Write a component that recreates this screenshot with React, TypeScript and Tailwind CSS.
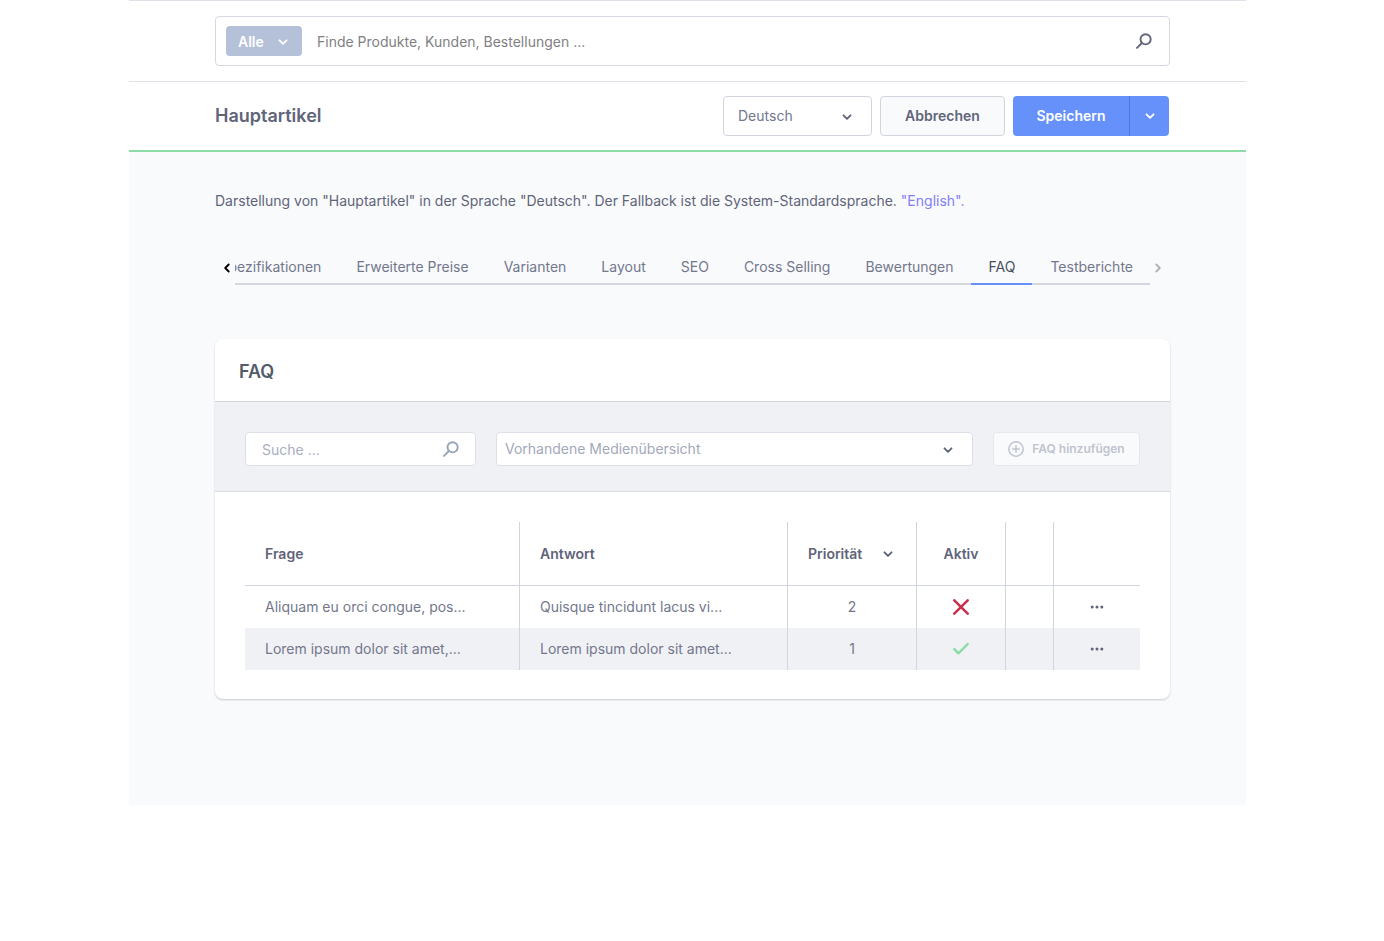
import type { ReactNode } from "react";

type IconProps = { className?: string };

function Chevron({ className = "" }: IconProps) {
  return (
    <svg viewBox="0 0 10 10" fill="none" stroke="currentColor" strokeWidth="1.9" strokeLinecap="round" strokeLinejoin="round" aria-hidden="true" className={`size-[10px] shrink-0 ${className}`}>
      <path d="M1.5 3.3 5 6.8l3.5-3.5" />
    </svg>
  );
}

function Magnifier({ className = "" }: IconProps) {
  return (
    <svg viewBox="0 0 16 16" fill="none" stroke="currentColor" strokeWidth="1.9" strokeLinecap="round" aria-hidden="true" className={`size-4 shrink-0 ${className}`}>
      <circle cx="9.6" cy="6.3" r="5.1" />
      <path d="M5.9 10 1 14.9" />
    </svg>
  );
}

function PlusCircle() {
  return (
    <svg viewBox="0 0 16 16" fill="none" stroke="currentColor" strokeWidth="1.5" strokeLinecap="round" aria-hidden="true" className="size-4 shrink-0">
      <circle cx="8" cy="8" r="7.2" />
      <path d="M8 4.7v6.6M4.7 8h6.6" />
    </svg>
  );
}

function Cross() {
  return (
    <svg viewBox="0 0 16 16" fill="none" stroke="currentColor" strokeWidth="2.5" strokeLinecap="round" role="img" aria-label="Nein" className="mx-auto size-4 text-[#c7304f]">
      <path d="m1.3 1.3 13.4 13.4M14.7 1.3 1.3 14.7" />
    </svg>
  );
}

function Check() {
  return (
    <svg viewBox="0 0 16 16" fill="none" stroke="currentColor" strokeWidth="2.4" strokeLinecap="round" strokeLinejoin="round" role="img" aria-label="Ja" className="mx-auto size-4 text-[#8adba5]">
      <path d="m1.3 8.2 4.1 4.1L14.7 3" />
    </svg>
  );
}

function Dots() {
  return (
    <svg viewBox="0 0 14 4" fill="currentColor" aria-hidden="true" className="h-1 w-[14px]">
      <circle cx="2.2" cy="2" r="1.5" />
      <circle cx="7" cy="2" r="1.5" />
      <circle cx="11.8" cy="2" r="1.5" />
    </svg>
  );
}

const tabs = ["Spezifikationen", "Erweiterte Preise", "Varianten", "Layout", "SEO", "Cross Selling", "Bewertungen", "FAQ", "Testberichte"];

const rows = [
  { question: "Aliquam eu orci congue, pos...", answer: "Quisque tincidunt lacus vi...", priority: 2, active: false },
  { question: "Lorem ipsum dolor sit amet,...", answer: "Lorem ipsum dolor sit amet...", priority: 1, active: true },
];

function HeadCell({ children, centered = false }: { children?: ReactNode; centered?: boolean }) {
  return (
    <th scope="col" className={`h-16 border-b border-[#d1d5e0] px-5 font-semibold text-[#5f6479] not-last:border-r ${centered ? "text-center" : "text-left"}`}>
      {children}
    </th>
  );
}

function FaqTable() {
  return (
    <table className="w-full table-fixed border-separate border-spacing-0">
      <colgroup>
        <col />
        <col className="w-[268px]" />
        <col className="w-[129px]" />
        <col className="w-[89px]" />
        <col className="w-12" />
        <col className="w-[86px]" />
      </colgroup>
      <thead>
        <tr>
          <HeadCell>Frage</HeadCell>
          <HeadCell>Antwort</HeadCell>
          <HeadCell>
            <button type="button" className="flex w-full items-center justify-between pr-[3px]">
              Priorität
              <Chevron />
            </button>
          </HeadCell>
          <HeadCell centered>Aktiv</HeadCell>
          <HeadCell />
          <HeadCell />
        </tr>
      </thead>
      <tbody>
        {rows.map((row) => (
          <tr key={row.priority} className="text-[#73778c] even:bg-[#f0f1f5] [&>td]:h-[42px] [&>td:not(:last-child)]:border-r [&>td]:border-[#d1d5e0]">
            <td className="px-5">{row.question}</td>
            <td className="px-5">{row.answer}</td>
            <td className="px-5 text-center">{row.priority}</td>
            <td>{row.active ? <Check /> : <Cross />}</td>
            <td />
            <td>
              <button type="button" aria-label="Aktionen" className="mx-auto flex h-6 w-6 items-center justify-center text-[#5f6479]">
                <Dots />
              </button>
            </td>
          </tr>
        ))}
      </tbody>
    </table>
  );
}

export default function App() {
  return (
    <div className="min-h-screen bg-white pr-[138px] pl-[129px] font-['Inter',sans-serif] text-[14px] leading-5 text-[#5f6479]">
      <div className="border-y border-[#dfe1e8] py-[15px] pr-[76px] pl-[86px]">
        <div className="flex h-[50px] items-center rounded border border-[#d5d9e4] pr-[17px] pl-[10px]">
          <button type="button" className="flex h-[30px] w-[76px] items-center justify-between rounded bg-[#b4c1d9] pt-0.5 pr-[14px] pl-3 font-semibold text-white">
            Alle
            <Chevron />
          </button>
          <input type="text" aria-label="Suche" placeholder="Finde Produkte, Kunden, Bestellungen ..." className="ml-[15px] min-w-0 flex-1 pt-0.5 outline-none placeholder:text-[#7f7f84]" />
          <button type="button" aria-label="Suchen">
            <Magnifier />
          </button>
        </div>
      </div>

      <header className="flex h-[70px] items-center justify-between border-b-2 border-[#8adba5] pr-[77px] pl-[86px]">
        <h1 className="text-[18px] leading-6 font-semibold">Hauptartikel</h1>
        <div className="flex gap-2">
          <div className="relative">
            <select aria-label="Sprache" className="h-10 w-[149px] appearance-none rounded border border-[#d1d5e0] bg-white pr-8 pl-[14px] text-[#73778c]">
              <option>Deutsch</option>
            </select>
            <Chevron className="pointer-events-none absolute top-4 right-5" />
          </div>
          <button type="button" className="h-10 w-[125px] rounded border border-[#d1d5e0] bg-[#f9fafc] font-semibold">
            Abbrechen
          </button>
          <div className="flex h-10 overflow-hidden rounded bg-[#6691fb] text-white">
            <button type="button" className="w-[117px] border-r border-[#4f79dd] font-semibold">
              Speichern
            </button>
            <button type="button" aria-label="Weitere Optionen" className="flex w-[39px] items-center justify-center">
              <Chevron />
            </button>
          </div>
        </div>
      </header>

      <main className="bg-[#f9fafc] pt-[39px] pr-[76px] pb-[106px] pl-[86px]">
        <p>
          Darstellung von "Hauptartikel" in der Sprache "Deutsch". Der Fallback ist die System-Standardsprache.{" "}
          <a href="#english" className="text-[#837dfb]">"English".</a>
        </p>

        <nav aria-label="Bereiche" className="mt-[38px] flex h-9 px-[7px]">
          <button type="button" aria-label="Zurück" className="flex w-[13px] shrink-0 items-center pt-px text-black">
            <Chevron className="rotate-90" />
          </button>
          <div role="tablist" className="flex min-w-0 flex-1 justify-end overflow-hidden">
            {tabs.map((tab) => (
              <button
                key={tab}
                type="button"
                role="tab"
                aria-selected={tab === "FAQ"}
                className="shrink-0 border-b-2 border-[#d5d7de] pt-0.5 pr-[17px] pl-[18px] text-[#73778c] aria-selected:border-[#6691fb] aria-selected:text-[#4a4f5c]"
              >
                {tab}
              </button>
            ))}
          </div>
          <button type="button" aria-label="Weiter" className="flex w-[13px] shrink-0 items-center justify-end pt-px text-[#b0b2b8]">
            <Chevron className="-rotate-90" />
          </button>
        </nav>

        <section className="mt-[54px] overflow-hidden rounded-lg bg-white shadow-[0_1px_2px_rgba(0,0,0,0.2)]">
          <h2 className="border-b border-[#d1d5e0] px-6 pt-[21px] pb-[17px] text-[18px] leading-6 font-semibold text-[#545b6b]">FAQ</h2>
          <div className="flex gap-5 border-b border-[#d8dbe4] bg-[#f0f1f5] p-[30px] pb-[25px]">
            <div className="flex h-[34px] w-[231px] items-center rounded border border-[#dcdfe7] bg-white px-4">
              <input type="text" aria-label="FAQ durchsuchen" placeholder="Suche ..." className="min-w-0 flex-1 pt-0.5 outline-none placeholder:text-[#a9aec0]" />
              <Magnifier className="text-[#98a3b8]" />
            </div>
            <div className="relative flex-1">
              <select aria-label="Medienübersicht" className="h-[34px] w-full appearance-none rounded border border-[#dcdfe7] bg-white pr-10 pl-2 text-[#a3a8ba]">
                <option>Vorhandene Medienübersicht</option>
              </select>
              <Chevron className="pointer-events-none absolute top-[13px] right-5" />
            </div>
            <button type="button" disabled className="flex h-[34px] w-[147px] items-center justify-center gap-2 rounded border border-[#e6e8ee] bg-[#f9fafc] text-[12px] font-semibold text-[#c0c4d0]">
              <PlusCircle />
              FAQ hinzufügen
            </button>
          </div>
          <div className="p-[30px] pb-[29px]">
            <FaqTable />
          </div>
        </section>
      </main>
    </div>
  );
}
